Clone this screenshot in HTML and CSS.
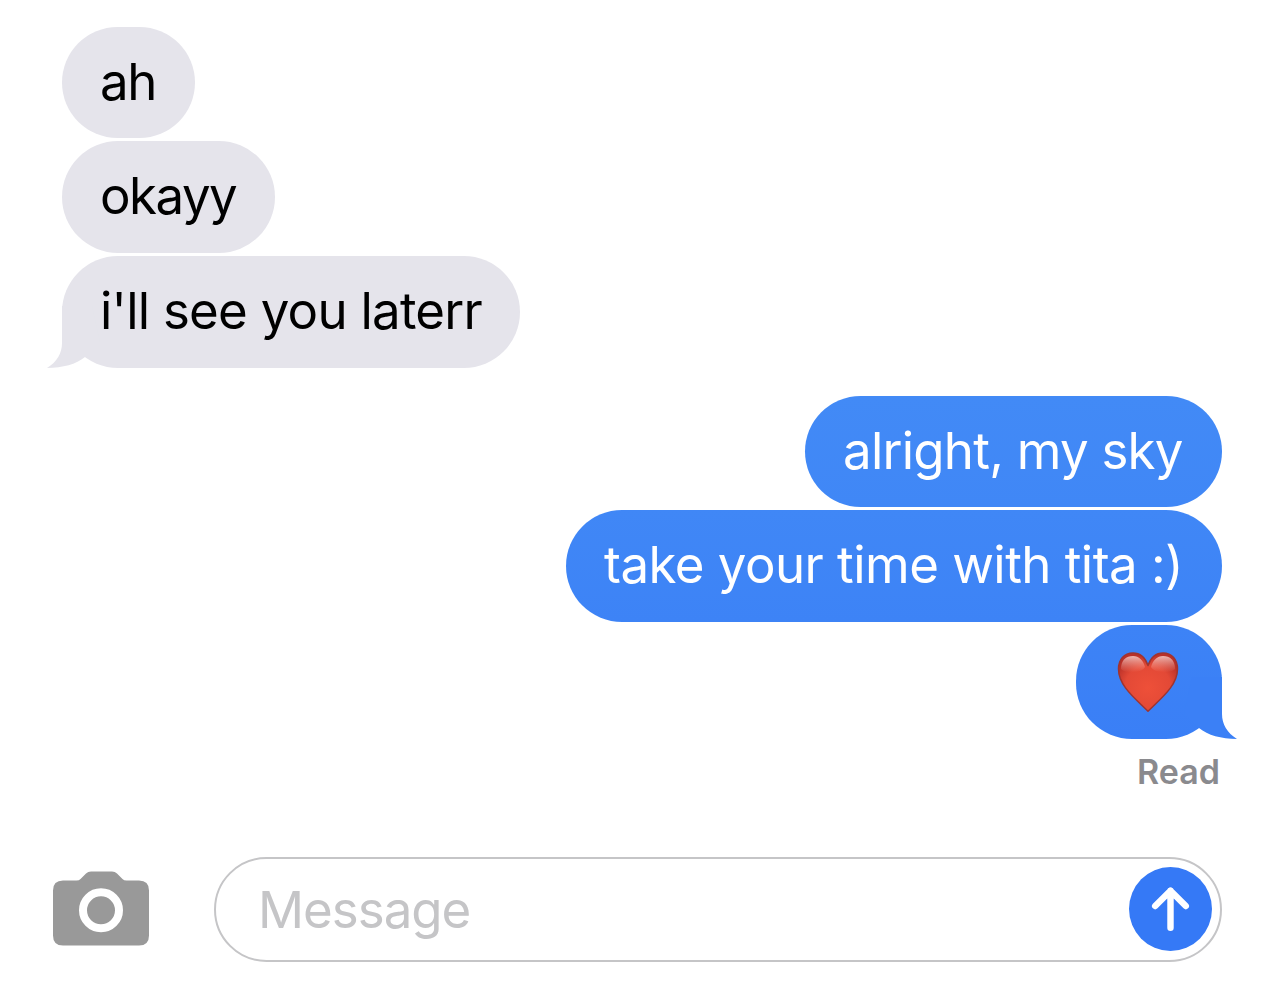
FILE: index.html
```
<!DOCTYPE html>
<html lang="en">
<head>
    <meta charset="UTF-8">
    <meta name="viewport" content="width=device-width, initial-scale=1.0">
    <title>Messages</title>
    <link rel="stylesheet" href="styles.css">
</head>
<body>
    <div class="chat">
        <div class="group received">
            <div class="bubble ah"><span>ah</span></div>
            <div class="bubble okayy"><span>okayy</span></div>
            <div class="bubble later">
                <span>i'll see you laterr</span>
                <svg class="tail" viewBox="0 0 60 62"><path d="M16 0V37C16 47 11 56 1 62C17 61.500 30 58.500 39 51L54 36L46 0Z"/></svg>
            </div>
        </div>

        <div class="group sent">
            <div class="bubble alright"><span>alright, my sky</span></div>
            <div class="bubble take"><span>take your time with tita :)</span></div>
            <div class="bubble love">
                <svg class="heart" viewBox="0 0 62 60" role="img" aria-label="red heart">
                    <defs>
                        <radialGradient id="red" cx="50%" cy="60%" r="60%">
                            <stop offset="0" stop-color="#ee5039"/>
                            <stop offset="0.65" stop-color="#e34936"/>
                            <stop offset="1" stop-color="#b93028"/>
                        </radialGradient>
                        <linearGradient id="shine" x1="0" y1="0" x2="0" y2="1">
                            <stop offset="0" stop-color="#ffe5e0" stop-opacity="0.75"/>
                            <stop offset="1" stop-color="#ffb5a8" stop-opacity="0"/>
                        </linearGradient>
                    </defs>
                    <path d="M31 13.500C28 5 22.500 1 16 1C7 1 1.500 7.500 1.500 17C1.500 31 13 42 24.500 53L31 59.300L37.500 53C49 42 60.500 31 60.500 17C60.500 7.500 55 1 46 1C39.500 1 34 5 31 13.500Z" fill="url(#red)" stroke="#9f3430" stroke-width="1.500" stroke-linejoin="round"/>
                    <path d="M4 17C4 8 9 4 16 4C22 4 26 8 28 15C25 21 9 22 4 17Z" fill="url(#shine)"/>
                    <path d="M58 17C58 8 53 4 46 4C40 4 36 8 34 15C37 21 53 22 58 17Z" fill="url(#shine)"/>
                </svg>
                <svg class="tail" viewBox="0 0 60 62"><path d="M16 0V37C16 47 11 56 1 62C17 61.500 30 58.500 39 51L54 36L46 0Z"/></svg>
            </div>
            <div class="status">Read</div>
        </div>

        <div class="compose">
            <svg class="camera" viewBox="0 0 96 75">
                <path d="M10 9.500H23.500Q26 9.500 27.500 8L33 2.500Q35 0.500 38 0.500H59Q62 0.500 64 2.500L69.500 8Q71 9.500 73.500 9.500H86Q96 9.500 96 19.500V64.500Q96 74.500 86 74.500H10Q0 74.500 0 64.500V19.500Q0 9.500 10 9.500Z" fill="#999"/>
                <circle cx="48" cy="39.300" r="18" fill="none" stroke="#fff" stroke-width="8"/>
            </svg>
            <div class="input">
                <span class="placeholder">Message</span>
                <button class="send" aria-label="Send">
                    <svg viewBox="0 0 84 84"><path d="M42 60.500V23M26.500 38.500L42 23L57.500 38.500"/></svg>
                </button>
            </div>
        </div>
    </div>
</body>
</html>
```
FILE: styles.css
```
* {
    box-sizing: border-box;
}
body {
    margin: 0;
    background-color: #fff;
    font-family: Inter, "Liberation Sans", sans-serif;
}
.chat {
    height: 994px;
    padding: 27px 62px 0;
    overflow: hidden;
}
.group {
    display: flex;
    flex-direction: column;
    gap: 3px;
}
.received {
    align-items: flex-start;
}
.sent {
    align-items: flex-end;
    margin-top: 28px;
}
.bubble {
    position: relative;
    display: flex;
    align-items: center;
    height: 112px;
    padding: 0 38px 2px;
    border-radius: 56px;
    font-size: 51px;
    line-height: 62px;
    letter-spacing: -0.75px;
    white-space: nowrap;
}
.received .bubble {
    background-color: #e5e4eb;
    color: #000;
}
.sent .bubble {
    color: #fff;
}
.bubble.ah {
    width: 133px;
    height: 111px;
    letter-spacing: -1.5px;
}
.bubble.okayy {
    width: 213px;
    letter-spacing: -1.5px;
}
.later {
    width: 458px;
}
.bubble.alright {
    width: 417px;
    height: 111px;
    background: linear-gradient(#428af6, #4087f6);
}
.bubble.take {
    width: 656px;
    letter-spacing: -0.54px;
    background: linear-gradient(#4087f6, #3d83f6);
}
.bubble.love {
    width: 146px;
    height: 114px;
    padding: 0 0 1px 41px;
    background: linear-gradient(#3d83f6, #3a7ff6);
}
.tail {
    position: absolute;
    bottom: 0;
    width: 60px;
    height: 62px;
}
.received .tail {
    left: -16px;
    fill: #e5e4eb;
}
.sent .tail {
    right: -16px;
    transform: scaleX(-1);
    fill: #3b80f6;
}
.heart {
    width: 62px;
    height: 60px;
}
.status {
    margin-top: 10px;
    padding-right: 2px;
    font-size: 34px;
    font-weight: 600;
    line-height: 40px;
    color: #8a8a8e;
}
.compose {
    display: flex;
    align-items: center;
    gap: 65px;
    margin: 65px 0 0 -9px;
}
.camera {
    width: 96px;
    height: 75px;
    margin-bottom: 2px;
}
.input {
    display: flex;
    flex: 1;
    align-items: center;
    justify-content: space-between;
    height: 105px;
    padding: 0 8px 1px 42px;
    border: 2px solid #c5c5c7;
    border-radius: 53px;
}
.placeholder {
    padding-top: 1px;
    font-size: 51px;
    line-height: 62px;
    letter-spacing: -1px;
    color: #c5c5c7;
}
.send {
    width: 83px;
    height: 84px;
    padding: 0;
    border: none;
    border-radius: 50%;
    background-color: #3579f6;
}
.send svg {
    display: block;
    fill: none;
    stroke: #fff;
    stroke-width: 6.500;
    stroke-linecap: round;
    stroke-linejoin: round;
}
```
